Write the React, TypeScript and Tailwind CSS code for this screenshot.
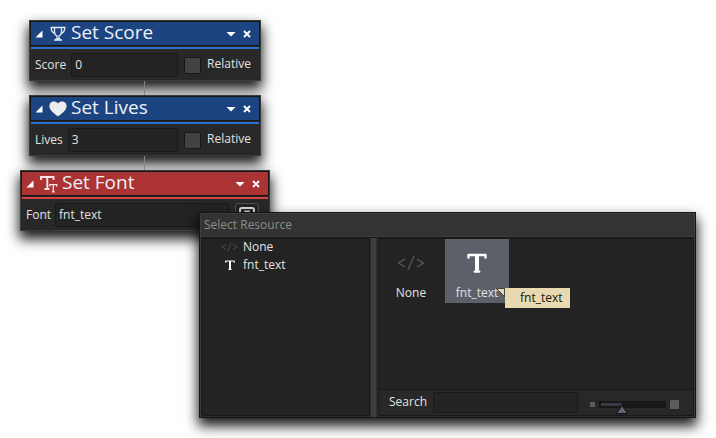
import { useState } from "react";
import type { ReactNode } from "react";

const SHADOW = "shadow-[0_7px_12px_1px_rgba(0,0,0,0.9)]";

function TrophyIcon() {
  return (
    <svg viewBox="0 0 18 18" className="size-[18px]" fill="none" stroke="#e6edf5" strokeWidth="1.3" aria-hidden="true">
      <path d="M5.500 2.500h7v4.500c0 2-1.500 3.500-2.500 4v3h-2v-3c-1-.5-2.500-2-2.500-4zM5 15h8" />
      <path d="M5.500 2.500H2.200c0 3 1 5 3.800 6M12.500 2.500h3.300c0 3-1 5-3.800 6M6.500 14.200h5" />
    </svg>
  );
}

function HeartIcon() {
  return (
    <svg viewBox="0 0 18 18" className="size-[18px]" fill="#ededed" aria-hidden="true">
      <path d="M9 16.500C6 14 .4 10.500.4 6.200.4 1.200 6 .2 9 3.600 12 .2 17.600 1.200 17.600 6.200c0 4.300-5.600 7.800-8.600 10.300z" />
    </svg>
  );
}

function FontIcon() {
  return (
    <svg viewBox="0 0 18 18" className="size-[18px]" fill="none" stroke="#f5e6e6" aria-hidden="true">
      <path d="M1 5V2h12.500v3M7.300 2v12M4.500 14h5" strokeWidth="1.900" />
      <path d="M9.800 11.500V9.700h7v1.800M13.300 9.700v7M11.800 16.900h3" strokeWidth="1.300" />
    </svg>
  );
}

function BoldTIcon({ className }: { className: string }) {
  return (
    <svg viewBox="0 0 20 20" className={className} fill="none" stroke="#fff" strokeLinecap="round" strokeLinejoin="round" aria-hidden="true">
      <path d="M1.500 4.500V2h17v2.500" strokeWidth="2.400" />
      <path d="M10 2v16" strokeWidth="4" strokeLinecap="butt" />
      <path d="M7.800 18.600h4.400" strokeWidth="2.400" />
    </svg>
  );
}

function CodeIcon({ className }: { className: string }) {
  return (
    <svg viewBox="0 0 28 16" className={className} fill="none" stroke="#5a5a5a" strokeWidth="1.200" aria-hidden="true">
      <path d="M8 4 1.500 8 8 12M20 4l6.500 4L20 12M17 1l-6 14" />
    </svg>
  );
}

function Node({
  title,
  icon,
  width,
  tone = "blue",
  children,
}: {
  title: string;
  icon: ReactNode;
  width: string;
  tone?: "blue" | "red";
  children: ReactNode;
}) {
  return (
    <section className={`${width} ${SHADOW} border border-[#3c3c3c] bg-[#282828]`}>
      <header
        className={`flex h-[25px] items-center border border-[#161616] pr-2 pl-1 ${
          tone === "blue" ? "bg-[#1c4481]" : "bg-[#ab3333]"
        }`}
      >
        <button aria-label={`Collapse ${title}`} className="size-2">
          <svg viewBox="0 0 8 8" className="size-2" fill="#fff"><path d="M7.500 .5v7H.5z" /></svg>
        </button>
        <span className="ml-[6px]">{icon}</span>
        <h2 className="ml-1 flex-1 pb-[2px] text-[19px] leading-[19px] text-[#edf1f7]">{title}</h2>
        <button aria-label={`${title} menu`} className="mr-[7px]">
          <svg viewBox="0 0 10 8" className="h-2 w-[10px]" fill="#fff"><path d="M.5 2h9L5 6.500z" /></svg>
        </button>
        <button aria-label={`Close ${title}`}>
          <svg viewBox="0 0 8 8" className="size-2" stroke="#fff" strokeWidth="1.900"><path d="m1 1 6 6M7 1 1 7" /></svg>
        </button>
      </header>
      <div className={`mx-px mt-px h-[2px] ${tone === "blue" ? "bg-[#2c6fd1]" : "bg-[#d84040]"}`} />
      <div className="flex items-center px-[5px] pt-1 pb-[3px]">{children}</div>
    </section>
  );
}

const FIELD = "h-6 min-w-0 flex-1 rounded-[2px] border border-[#191919] bg-[#232323] px-[3px] pb-[2px] outline-none";

function ValueNode({ title, icon, label, value }: { title: string; icon: ReactNode; label: string; value: string }) {
  return (
    <Node title={title} icon={icon} width="w-[232px]">
      <label htmlFor={label} className="mr-[5px]">{label}</label>
      <input id={label} defaultValue={value} className={FIELD} />
      <label className="ml-[6px] flex items-center gap-[6px] pr-1">
        <input
          type="checkbox"
          className="size-[17px] appearance-none rounded-[2px] border border-[#181818] bg-[#414342] checked:bg-[#8a8c8b]"
        />
        <span className="pb-[2px]">Relative</span>
      </label>
    </Node>
  );
}

function Connector() {
  return <div className="relative z-10 h-[14px] w-[2px] border-l border-[#858585]" />;
}

function SizeSlider() {
  const [size, setSize] = useState(33);
  return (
    <div className="flex items-center gap-1 pt-[3px]">
      <span className="size-[5px] bg-[#5c5c5c]" />
      <div className="relative h-[7px] w-[67px] bg-[#171717] px-[2px] pt-[2px]">
        <div className="h-[3px] bg-[#373a45]" style={{ width: `${size}%` }} />
        <svg
          viewBox="0 0 12 9"
          className="pointer-events-none absolute top-1 h-[9px] w-3 -translate-x-1/2"
          style={{ left: `${size + 1}%` }}
          fill="#60657a"
          stroke="#121212"
          aria-hidden="true"
        >
          <path d="M6 .5 11.500 8.500H.5z" />
        </svg>
        <input
          type="range"
          aria-label="Thumbnail size"
          value={size}
          onChange={(e) => setSize(Number(e.target.value))}
          className="absolute inset-0 w-full opacity-0"
        />
      </div>
      <span className="size-[9px] bg-[#5c5c5c]" />
    </div>
  );
}

function ResourceDialog() {
  return (
    <section
      role="dialog"
      aria-labelledby="dialog-title"
      className={`${SHADOW} absolute top-[212px] right-5 left-[199px] z-20 min-w-[400px] border border-[#161616] bg-[#2d2d2d]`}
    >
      <h2 id="dialog-title" className="h-6 border border-[#3d3d3d] bg-[#333] px-[3px] leading-[22px] text-[#8c8c8c]">
        Select Resource
      </h2>
      <div className="flex border-x border-t border-x-[#3d3d3d] border-t-[#191919]">
        <ul className="mb-px w-[169px] shrink-0 rounded-[2px] border border-[#191919] bg-[#232323] pl-[19px]">
          <li className="h-[18px]">
            <button className="flex h-4 items-center gap-[5px]">
              <CodeIcon className="h-[10px] w-[17px]" />
              None
            </button>
          </li>
          <li className="h-[18px]">
            <button className="flex h-4 items-center gap-[5px]">
              <span className="flex w-[17px] justify-center"><BoldTIcon className="size-[10px]" /></span>
              fnt_text
            </button>
          </li>
        </ul>
        <div className="mr-[2px] ml-px w-[5px] shrink-0 bg-[#3e3e3e]" />
        <div className="mb-px flex min-w-0 flex-1 flex-col rounded-[2px] border border-[#191919] bg-[#232323]">
          <div className="flex min-h-[150px] flex-1 gap-[2px]">
            <button className="flex size-16 flex-col items-center justify-end">
              <CodeIcon className="h-4 w-7" />
              <span className="mt-3 leading-5">None</span>
            </button>
            <button className="relative flex size-16 flex-col items-center justify-end bg-[#5c6169]">
              <BoldTIcon className="size-5" />
              <span className="mt-[10px] leading-5">fnt_text</span>
              <span role="tooltip" className="absolute top-[49px] left-[60px] h-5 bg-[#e9d9b0] pr-[7px] pl-[15px] leading-[19px] text-[#161616]">
                fnt_text
                <svg viewBox="0 0 9 9" className="absolute top-0 -left-[9px] size-[9px]" aria-hidden="true">
                  <path d="M.5 .5h8v8z" fill="#e9d9b0" stroke="#333" strokeWidth=".8" />
                </svg>
              </span>
            </button>
          </div>
          <div className="flex items-center border-t border-[#191919] bg-[#282828] px-[10px] pt-[2px] pb-[2px]">
            <label htmlFor="search" className="mr-[6px] pb-[2px]">Search</label>
            <input id="search" className="h-[21px] w-[145px] rounded-[2px] border border-[#191919] bg-[#232323] px-1 outline-none" />
            <div className="ml-3"><SizeSlider /></div>
          </div>
        </div>
      </div>
    </section>
  );
}

export default function App() {
  return (
    <main className="relative min-h-screen bg-white px-5 pt-5 font-['Open_Sans',sans-serif] text-[12px] leading-4 text-[#e2e2e2]">
      <div className="flex w-[250px] flex-col items-center">
        <ValueNode title="Set Score" icon={<TrophyIcon />} label="Score" value="0" />
        <Connector />
        <ValueNode title="Set Lives" icon={<HeartIcon />} label="Lives" value="3" />
        <Connector />
        <Node title="Set Font" icon={<FontIcon />} width="w-[250px]" tone="red">
          <label htmlFor="font" className="mr-1">Font</label>
          <input id="font" defaultValue="fnt_text" className={FIELD} />
          <button
            aria-label="Choose font"
            className="mr-[5px] ml-[6px] flex size-6 items-start justify-center rounded-[3px] border border-[#505050] bg-[#232323] pt-[3px]"
          >
            <svg viewBox="0 0 16 14" className="h-[14px] w-4" aria-hidden="true">
              <rect x="1" y="1" width="14" height="12" rx="2" fill="none" stroke="#d8d8d8" strokeWidth="2" />
              <path d="M4.500 3.500h7L8 7z" fill="#d8d8d8" />
            </svg>
          </button>
        </Node>
      </div>
      <ResourceDialog />
    </main>
  );
}
